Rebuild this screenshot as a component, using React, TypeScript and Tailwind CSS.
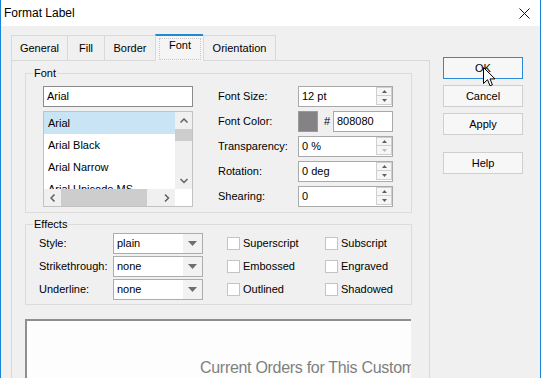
import React from "react";

const Tri = ({ dir, color = "#606060" }: { dir: "up" | "down"; color?: string }) => (
  <svg width="5" height="3" viewBox="0 0 5 3">
    <path d={dir === "up" ? "M0 3 L2.5 0 L5 3 Z" : "M0 0 L2.5 3 L5 0 Z"} fill={color} />
  </svg>
);

const Chevron = ({ dir }: { dir: "up" | "down" | "left" | "right" }) => {
  const d =
    dir === "up"
      ? "M0.5 4.5 L4 1 L7.5 4.5"
      : dir === "down"
      ? "M0.5 1 L4 4.5 L7.5 1"
      : dir === "left"
      ? "M4.5 0.5 L1 4 L4.5 7.5"
      : "M1 0.5 L4.5 4 L1 7.5";
  const w = dir === "up" || dir === "down" ? 8 : 6;
  const h = dir === "up" || dir === "down" ? 6 : 8;
  return (
    <svg width={w} height={h} viewBox={`0 0 ${w} ${h}`}>
      <path d={d} fill="none" stroke="#5f5f5f" strokeWidth="1.5" />
    </svg>
  );
};

const Spin = ({ value, downDisabled = false }: { value: string; downDisabled?: boolean }) => (
  <div className="h-[21px] w-[95px] shrink-0 border border-[#a9a9a9] bg-white flex items-start justify-between">
    <span className="pl-[3px] pt-[3px]">{value}</span>
    <div className="flex flex-col">
      <div className="w-[16px] h-[9px] border border-[#cfcfcf] bg-[#f6f6f6] flex items-center justify-center">
        <Tri dir="up" />
      </div>
      <div className="w-[16px] h-[9px] border-x border-b border-[#cfcfcf] bg-[#f6f6f6] flex items-center justify-center">
        <Tri dir="down" color={downDisabled ? "#bdbdbd" : "#606060"} />
      </div>
    </div>
  </div>
);

const Combo = ({ value }: { value: string }) => (
  <div className="h-[21px] w-[90px] shrink-0 border border-[#adadad] bg-white flex">
    <span className="flex-1 pl-[3px] flex items-center">{value}</span>
    <div className="w-[19px] bg-[#f2f2f2] flex items-center justify-center">
      <svg width="9" height="5" viewBox="0 0 9 5">
        <path d="M0 0 L9 0 L4.5 5 Z" fill="#6e6e6e" />
      </svg>
    </div>
  </div>
);

const Check = ({ label, w = true }: { label: string; w?: boolean }) => (
  <div className={`${w ? "w-[98px]" : ""} shrink-0 flex items-center`}>
    <div className="w-[13px] h-[13px] shrink-0 border border-[#c4c4c4] bg-white" />
    <span className="ml-[3px] whitespace-nowrap">{label}</span>
  </div>
);

const Label = ({ children }: { children: React.ReactNode }) => (
  <div className="w-[80px] shrink-0 flex items-center">{children}</div>
);

const EffectRow = ({ label, value, a, b }: { label: string; value: string; a: string; b: string }) => (
  <div className="flex items-center h-[21px]">
    <span className="w-[74px] shrink-0 whitespace-nowrap">{label}</span>
    <Combo value={value} />
    <div className="ml-[24px] flex shrink-0">
      <Check label={a} />
      <Check label={b} w={false} />
    </div>
  </div>
);

export default function App() {
  const fonts = ["Arial", "Arial Black", "Arial Narrow", "Arial Unicode MS"];
  return (
    <div className="w-[541px] h-[378px] overflow-hidden relative bg-[#f0f0f0] border-x border-[#1883d7] font-['Liberation_Sans',Arial,sans-serif] text-[11px] leading-[13px] text-black">
      {/* Title bar */}
      <div className="h-[26px] bg-white flex items-center justify-between pl-[3px] pr-[10px]">
        <span className="text-[12px] leading-[14px]">Format Label</span>
        <svg width="11" height="11" viewBox="0 0 11 11">
          <path d="M0.5 0.5 L10.5 10.5 M10.5 0.5 L0.5 10.5" stroke="#111" strokeWidth="1" />
        </svg>
      </div>

      <div className="flex">
        {/* Left: tabs + panel */}
        <div className="ml-[10px] w-[419px] shrink-0">
          <div className="mt-[8px] h-[26px] flex items-end">
            <div className="h-[25px] w-[56px] border-t border-l border-[#d9d9d9] flex items-center justify-center">General</div>
            <div className="h-[25px] w-[37px] border-t border-l border-[#d9d9d9] flex items-center justify-center">Fill</div>
            <div className="h-[25px] w-[51px] border-t border-l border-[#d9d9d9] flex items-center justify-center">Border</div>
            <div className="relative z-10 h-[27px] mb-[-1px] w-[48px] border-t-2 border-t-[#1f8ad2] border-l border-l-[#d9d9d9] bg-[#f5f5f5] pt-[2px] pl-[3px]">
              <div className="w-[42px] h-[22px] border border-dotted border-[#c8c8c8] flex justify-center">Font</div>
            </div>
            <div className="h-[25px] w-[73px] border-t border-x border-[#d9d9d9] flex items-center justify-center">Orientation</div>
          </div>

          <div className="h-[330px] border border-[#d9d9d9]">
            <div className="ml-[13px] mt-[12px] w-[387px]">
              {/* Font group */}
              <div className="relative border border-[#dcdcdc] pt-[12px] pl-[17px] pb-[5px] flex">
                <span className="absolute -top-[7px] left-[7px] px-[1px] bg-[#f0f0f0]">Font</span>
                <div className="w-[150px] shrink-0 flex flex-col gap-[4px]">
                  <div className="h-[21px] border border-[#8a8a8a] bg-white pl-[3px] flex items-center">Arial</div>
                  <div className="h-[96px] border border-[#c2c2c2] bg-white flex flex-col">
                    <div className="flex h-[77px]">
                      <div className="flex-1 overflow-hidden">
                        {fonts.map((f, i) => (
                          <div
                            key={f}
                            className={`h-[22px] pl-[4px] flex items-center whitespace-nowrap ${i === 0 ? "bg-[#c9e5f5]" : ""}`}
                          >
                            {f}
                          </div>
                        ))}
                      </div>
                      <div className="w-[17px] bg-[#f0f0f0] flex flex-col">
                        <div className="h-[17px] flex items-center justify-center">
                          <Chevron dir="up" />
                        </div>
                        <div className="h-[12px] bg-[#cdcdcd]" />
                        <div className="flex-1" />
                        <div className="h-[17px] flex items-center justify-center">
                          <Chevron dir="down" />
                        </div>
                      </div>
                    </div>
                    <div className="flex h-[17px]">
                      <div className="flex-1 bg-[#f0f0f0] flex">
                        <div className="w-[17px] flex items-center justify-center">
                          <Chevron dir="left" />
                        </div>
                        <div className="w-[86px] bg-[#cdcdcd]" />
                        <div className="flex-1" />
                        <div className="w-[17px] flex items-center justify-center">
                          <Chevron dir="right" />
                        </div>
                      </div>
                      <div className="w-[17px] bg-white" />
                    </div>
                  </div>
                </div>

                <div className="ml-[25px] flex flex-col gap-[4px]">
                  <div className="flex h-[21px]">
                    <Label>Font Size:</Label>
                    <Spin value="12 pt" />
                  </div>
                  <div className="flex h-[21px]">
                    <Label>Font Color:</Label>
                    <div className="w-[20px] h-[21px] border border-[#9a9a9a] bg-[#858285]" />
                    <span className="ml-[6px] w-[9px] flex items-center">#</span>
                    <div className="w-[60px] h-[21px] border border-[#a9a9a9] bg-white pl-[3px] flex items-center">808080</div>
                  </div>
                  <div className="flex h-[21px]">
                    <Label>Transparency:</Label>
                    <Spin value="0 %" downDisabled />
                  </div>
                  <div className="flex h-[21px]">
                    <Label>Rotation:</Label>
                    <Spin value="0 deg" />
                  </div>
                  <div className="flex h-[21px]">
                    <Label>Shearing:</Label>
                    <Spin value="0" />
                  </div>
                </div>
              </div>

              {/* Effects group */}
              <div className="relative mt-[11px] border border-[#dcdcdc] pt-[8px] pl-[13px] pb-[4px] flex flex-col gap-[2px]">
                <span className="absolute -top-[7px] left-[7px] px-[1px] bg-[#f0f0f0]">Effects</span>
                <EffectRow label="Style:" value="plain" a="Superscript" b="Subscript" />
                <EffectRow label="Strikethrough:" value="none" a="Embossed" b="Engraved" />
                <EffectRow label="Underline:" value="none" a="Outlined" b="Shadowed" />
              </div>

              {/* Preview */}
              <div className="mt-[14px] w-[386px] h-[80px] border-t-2 border-l-2 border-[#8f8f8f] bg-[#fcfdfc] overflow-hidden pt-[38px] pl-[173px] whitespace-nowrap text-[16px] leading-[18px] tracking-[-0.3px] text-[#808080]">
                Current Orders for This Customer
              </div>
            </div>
          </div>
        </div>

        {/* Right: buttons */}
        <div className="ml-[13px] mt-[31px] flex flex-col gap-[6px]">
          <div className="w-[80px] h-[22px] border border-[#2a8ad8] bg-[#f7f7f7] flex items-center justify-center">OK</div>
          <div className="w-[80px] h-[22px] border border-[#cfcfcf] bg-[#f7f7f7] flex items-center justify-center">Cancel</div>
          <div className="w-[80px] h-[22px] border border-[#cfcfcf] bg-[#f7f7f7] flex items-center justify-center">Apply</div>
          <div className="mt-[11px] w-[80px] h-[22px] border border-[#cfcfcf] bg-[#f7f7f7] flex items-center justify-center">Help</div>
        </div>
      </div>

      {/* Mouse cursor */}
      <svg className="absolute left-[482px] top-[67px]" width="13" height="20" viewBox="0 0 13 20">
        <path d="M0.5 0.5 L0.5 16.5 L4.5 12.7 L7 18.8 L9.4 17.8 L7 11.9 L12 11.9 Z" fill="#fff" stroke="#000" strokeWidth="1" strokeLinejoin="miter" />
      </svg>
    </div>
  );
}
